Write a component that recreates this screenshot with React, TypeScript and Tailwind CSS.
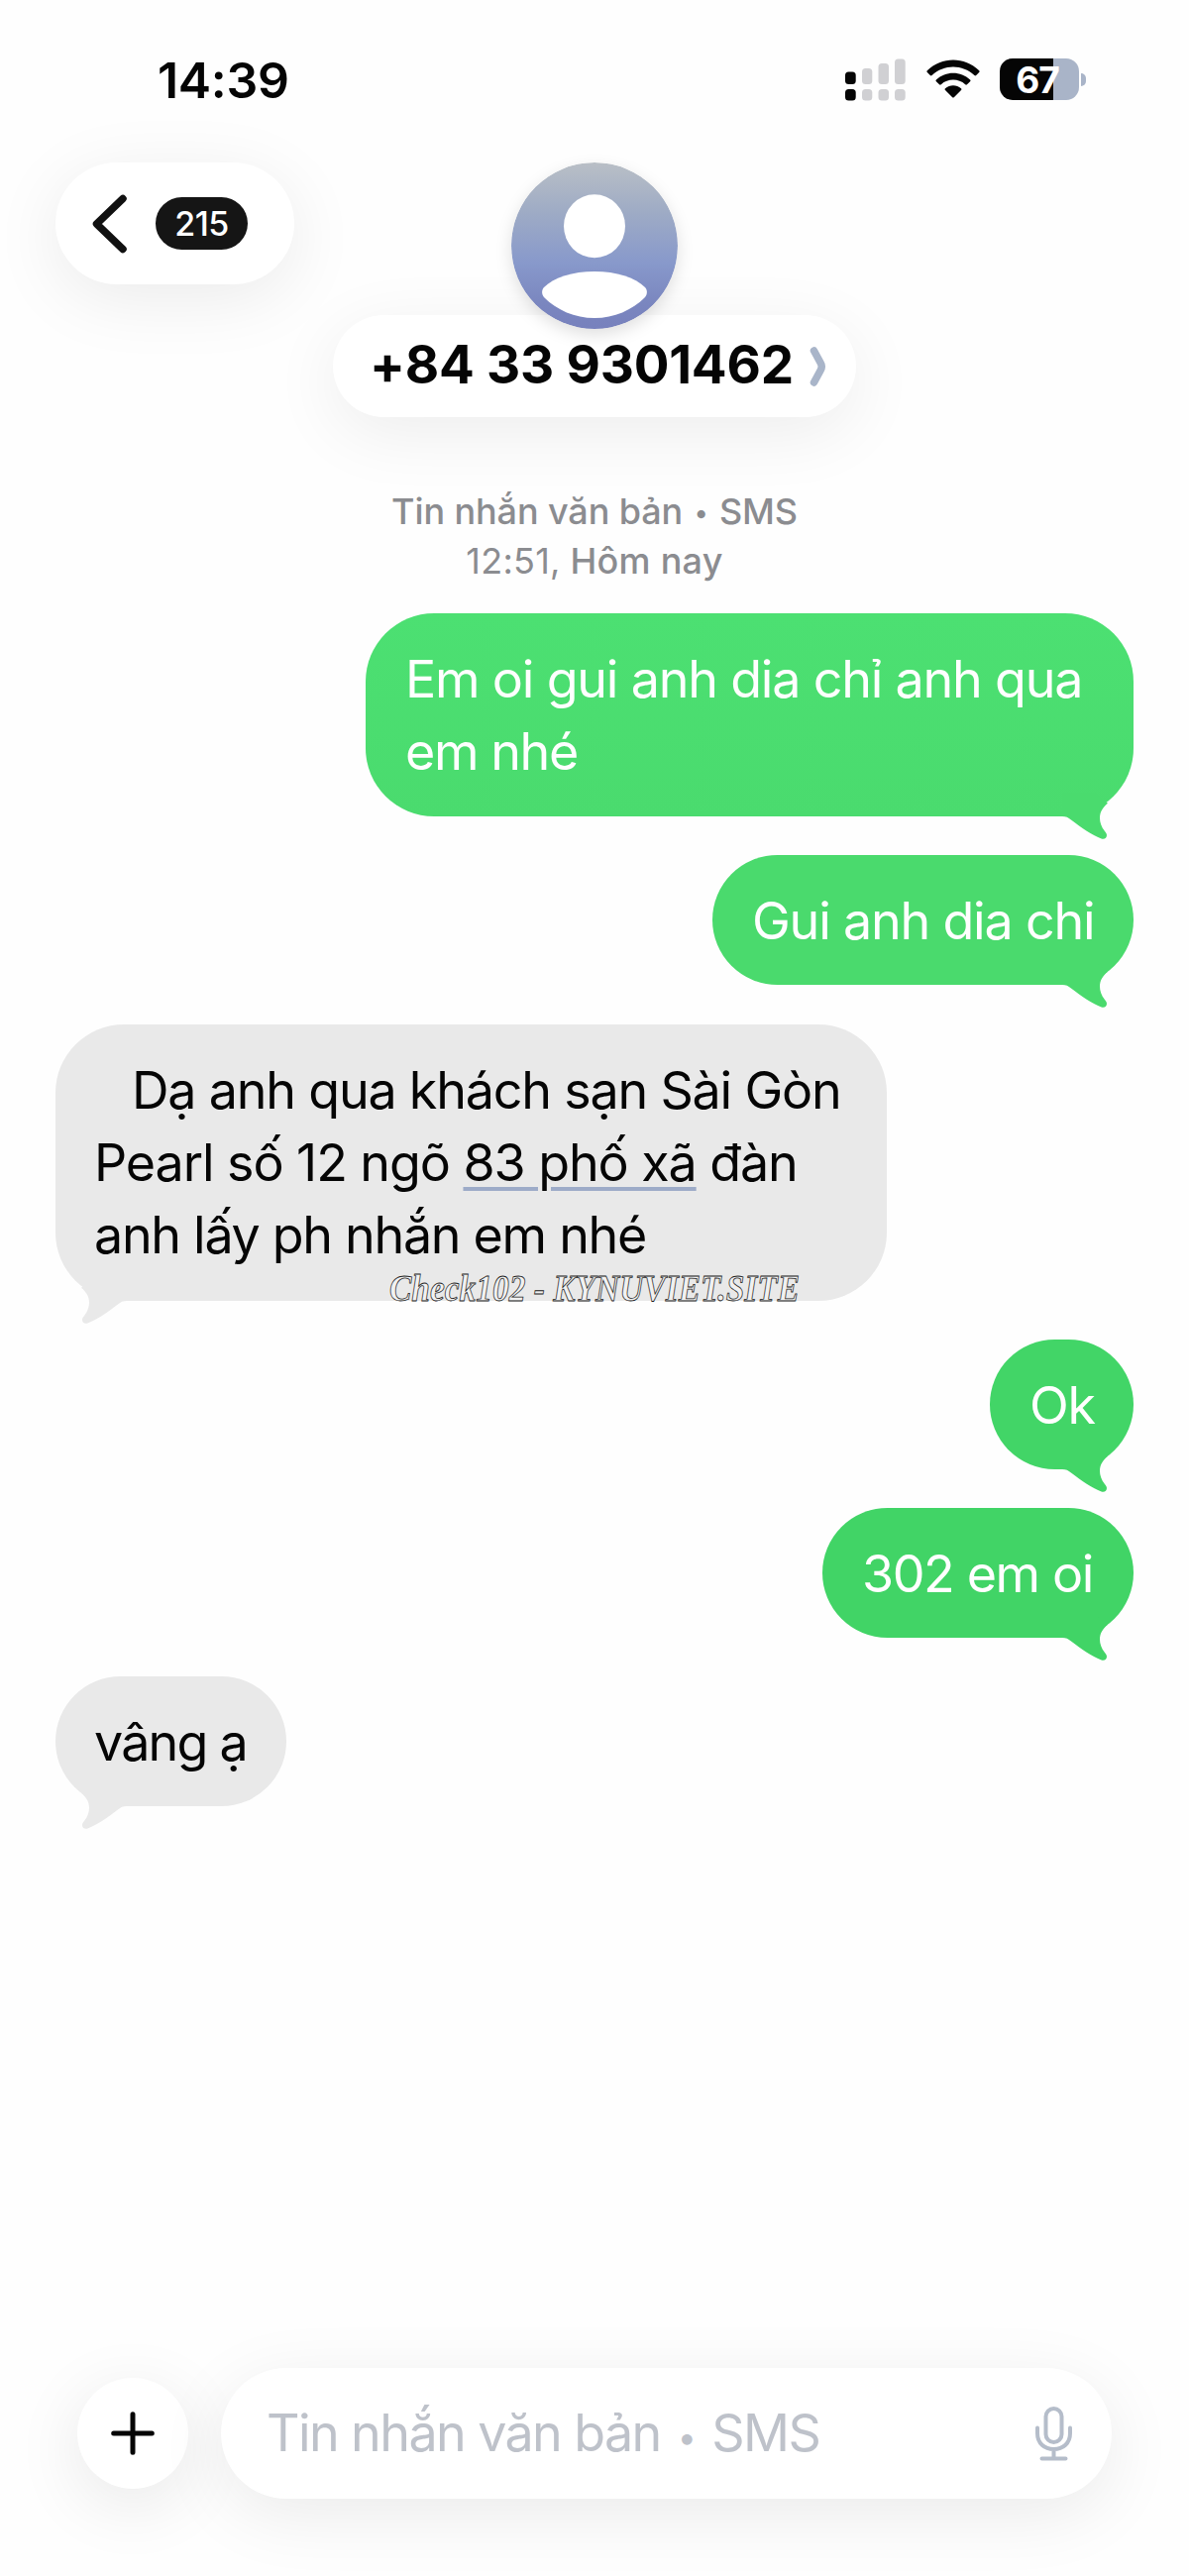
import React from 'react';
import { clsx } from 'clsx';

interface Line {
  text: React.ReactNode;
  className: string;
}

interface Message {
  id: number;
  side: 'sent' | 'received';
  box: string;
  tail: string;
  lines: Line[];
  watermark?: string;
}

const messages: Message[] = [
  {
    id: 1,
    side: 'sent',
    box: 'w-[775px] h-[205px] rounded-[69px] bg-linear-to-b from-[#4ce072] to-[#4adb6e]',
    tail: 'text-[#4adb6e]',
    lines: [
      { text: 'Em oi gui anh dia chỉ anh qua', className: 'tracking-[-1.2px]' },
      { text: 'em nhé', className: 'tracking-[-1.4px]' },
    ],
  },
  {
    id: 2,
    side: 'sent',
    box: 'w-[425px] h-[131px] rounded-[65.5px] bg-[#4ada6d]',
    tail: 'text-[#4ada6d]',
    lines: [{ text: 'Gui anh dia chi', className: 'tracking-[-1.2px]' }],
  },
  {
    id: 3,
    side: 'received',
    box: 'w-[839px] h-[279px] rounded-[69px] bg-[#e9e9e9]',
    tail: 'text-[#e9e9e9]',
    lines: [
      { text: 'Dạ anh qua khách sạn Sài Gòn', className: 'tracking-[-1.2px] pl-[38px]' },
      {
        text: (
          <>
            Pearl số 12 ngõ{' '}
            <span className="underline decoration-[#9dabc8] decoration-[4px] underline-offset-[6px]">83 phố xã</span> đàn
          </>
        ),
        className: 'tracking-[-1.08px]',
      },
      { text: 'anh lấy ph nhắn em nhé', className: 'tracking-[-1.3px]' },
    ],
    watermark: 'Check102 - KYNUVIET.SITE',
  },
  {
    id: 4,
    side: 'sent',
    box: 'w-[145px] h-[131px] rounded-[65.5px] bg-[#42d567]',
    tail: 'text-[#42d567]',
    lines: [{ text: 'Ok', className: 'tracking-[-1.2px]' }],
  },
  {
    id: 5,
    side: 'sent',
    box: 'w-[314px] h-[131px] rounded-[65.5px] bg-[#41d466]',
    tail: 'text-[#41d466]',
    lines: [{ text: '302 em oi', className: 'tracking-[-1.4px]' }],
  },
  {
    id: 6,
    side: 'received',
    box: 'w-[233px] h-[131px] rounded-[65.5px] bg-[#e9e9e9]',
    tail: 'text-[#e9e9e9]',
    lines: [{ text: 'vâng ạ', className: 'tracking-[-1.8px]' }],
  },
];

function SignalIcon() {
  return (
    <svg className="w-[62px] h-[43px]" viewBox="0 0 62 43">
      <g fill="#050505">
        <rect x="0" y="13.5" width="10.7" height="12.5" rx="3.5" />
        <rect x="0" y="31" width="10.7" height="11.5" rx="3.5" />
      </g>
      <g fill="#d0d0d3">
        <rect x="17" y="10" width="10.3" height="16" rx="3.5" />
        <rect x="33.5" y="5" width="10.5" height="21" rx="3.5" />
        <rect x="50" y="0.5" width="10.7" height="25.5" rx="3.5" />
        <rect x="17" y="31" width="10.3" height="11.5" rx="3.5" />
        <rect x="33.5" y="31" width="10.5" height="11.5" rx="3.5" />
        <rect x="50" y="31" width="10.7" height="11.5" rx="3.5" />
      </g>
    </svg>
  );
}

function WifiIcon() {
  return (
    <svg className="w-[54px] h-[40px]" viewBox="0 0 54 40" fill="#050505">
      <path d="M0.8 11.2C15.5 -3.2 38.5 -3.2 53.2 11.2C53.8 11.8 53.8 12.4 53.2 13L50.2 16C49.6 16.6 49 16.6 48.4 16C36.4 4.6 17.6 4.6 5.6 16C5 16.6 4.4 16.6 3.8 16L0.8 13C0.2 12.4 0.2 11.8 0.8 11.2Z" />
      <path d="M9.9 20.4C19.5 11.4 34.5 11.4 44.1 20.4C44.7 21 44.7 21.6 44.1 22.2L41 25.2C40.4 25.8 39.8 25.8 39.2 25.2C32.3 19 21.7 19 14.8 25.2C14.2 25.8 13.6 25.8 13 25.2L9.9 22.2C9.3 21.6 9.3 21 9.9 20.4Z" />
      <path d="M19 29.3C23.6 25.3 30.4 25.3 35 29.3C35.6 29.9 35.6 30.5 35 31.1L28 38C27.3 38.7 26.7 38.7 26 38L19 31.1C18.4 30.5 18.4 29.9 19 29.3Z" />
    </svg>
  );
}

function Battery() {
  return (
    <div className="flex items-center gap-[2.5px]">
      <div className="flex w-[80px] h-[42px] items-center justify-center rounded-[13px] bg-linear-to-r from-[#050505] from-[67.5%] to-[#a9b4c8] to-[67.5%] pr-[3px] text-[37px] font-bold leading-none tracking-[-1px] text-white">
        67
      </div>
      <div className="w-[5px] h-[13px] rounded-r-full bg-[#a9b4c8]" />
    </div>
  );
}

function StatusBar() {
  return (
    <div className="flex h-[164px] shrink-0 justify-between pl-[159px] pr-[104px]">
      <div className="mt-[51px] text-[50px] font-semibold leading-[60px] tracking-[-0.3px] text-[#050505]">14:39</div>
      <div className="mt-[59px] flex h-[42px] items-center">
        <SignalIcon />
        <div className="ml-[20px]">
          <WifiIcon />
        </div>
        <div className="ml-[20px]">
          <Battery />
        </div>
      </div>
    </div>
  );
}

function Avatar() {
  return (
    <svg className="relative z-10 size-[168px] rounded-full drop-shadow-[0_6px_8px_rgba(0,0,0,0.12)]" viewBox="0 0 168 168">
      <defs>
        <linearGradient id="avatar" x1="0" y1="0" x2="0" y2="1">
          <stop offset="0" stopColor="#b9bfc6" />
          <stop offset="0.3" stopColor="#9eabc5" />
          <stop offset="0.6" stopColor="#8899cb" />
          <stop offset="0.85" stopColor="#7a86bf" />
          <stop offset="1" stopColor="#7781bd" />
        </linearGradient>
      </defs>
      <circle cx="84" cy="84" r="84" fill="url(#avatar)" />
      <ellipse cx="84" cy="64.3" rx="31" ry="32" fill="#fff" />
      <path
        d="M33 126C43 116 62 110 84 110C106 110 125 116 135 126C137.500 128.500 137.500 133 135 136C122 149 104 157 84 157C64 157 46 149 33 136C30.500 133 30.500 128.500 33 126Z"
        fill="#fff"
      />
    </svg>
  );
}

function Header() {
  return (
    <div className="grid shrink-0 grid-cols-[280px_528px_280px] items-start px-[56px]">
      <div className="flex w-[241px] h-[123px] items-center rounded-full bg-white pl-[37px] shadow-[0_14px_70px_rgba(0,0,0,0.08)]">
        <svg className="w-[36px] h-[60px]" viewBox="0 0 36 60" fill="none">
          <path d="M31 4.500L4.500 30L31 55.500" stroke="#111" strokeWidth="7.500" strokeLinecap="round" strokeLinejoin="round" />
        </svg>
        <div className="ml-[28px] flex w-[93px] h-[53px] items-center justify-center rounded-full bg-[#151515] text-[34px] font-medium leading-none tracking-[-0.5px] text-white">
          215
        </div>
      </div>
      <div className="flex flex-col items-center">
        <Avatar />
        <div className="-mt-[14px] flex w-[528px] h-[103px] items-center rounded-full bg-white pl-[37px] shadow-[0_16px_70px_rgba(0,0,0,0.07)]">
          <span className="w-[430px] whitespace-nowrap pb-[3px] text-[53px] font-bold leading-[64px] tracking-[-0.2px] text-[#050505]">
            +84 33 9301462
          </span>
          <svg className="ml-[14px] w-[17px] h-[40px]" viewBox="0 0 17 40" fill="none">
            <path d="M4.500 4L11 16Q13.500 20 11 24L4.500 36" stroke="#a9b5c9" strokeWidth="7.500" strokeLinecap="round" strokeLinejoin="round" />
          </svg>
        </div>
      </div>
    </div>
  );
}

function Tail({ side, className }: { side: Message['side']; className: string }) {
  return (
    <svg
      className={clsx('absolute -bottom-[26px] w-[80px] h-[50px]', side === 'sent' ? 'right-0' : 'left-0 -scale-x-100', className)}
      viewBox="0 0 80 50"
      fill="currentColor"
    >
      <path d="M8 24C12 24 14 25 17 27.500C28 36 38 42.500 47 46.300C50.500 47.700 53 46 53 43C53 41.800 52.500 41 51 39C47.500 34.500 46 30 46 25.700C46 19.500 49 15 54 10.800L40 0H8Z" />
    </svg>
  );
}

function Bubble({ message }: { message: Message }) {
  const sent = message.side === 'sent';
  return (
    <div
      className={clsx(
        'relative shrink-0 pt-[30px] text-[52px] leading-[73.4px]',
        sent ? 'self-end pl-[40px] text-white' : 'self-start pl-[39px] text-[#050505]',
        message.box
      )}
    >
      <Tail side={message.side} className={message.tail} />
      {message.lines.map((line, i) => (
        <div key={i} className={clsx('relative whitespace-nowrap', line.className)}>
          {line.text}
        </div>
      ))}
      {message.watermark && (
        <svg className="absolute left-[325px] top-[236px] w-[440px] h-[60px] overflow-visible" viewBox="0 0 440 60">
          <text
            x="12"
            y="43"
            textLength="414"
            lengthAdjust="spacingAndGlyphs"
            fill="#f1f1f1"
            stroke="#222"
            strokeWidth="0.8"
            className="font-['Liberation_Serif',serif] text-[38px] font-bold italic leading-none tracking-normal"
          >
            {message.watermark}
          </text>
        </svg>
      )}
    </div>
  );
}

function Composer() {
  return (
    <div className="mt-auto flex shrink-0 items-center gap-[33px] pb-[78px] pl-[78px] pr-[78px]">
      <button className="flex size-[112px] items-center justify-center rounded-full bg-white shadow-[0_16px_70px_rgba(0,0,0,0.09)]">
        <svg className="size-[44px]" viewBox="0 0 44 44" fill="none">
          <path d="M22 2.700V41.300M2.700 22H41.300" stroke="#050505" strokeWidth="5" strokeLinecap="round" />
        </svg>
      </button>
      <div className="flex h-[132px] flex-1 items-center justify-between rounded-full bg-white pl-[46px] pr-[39px] shadow-[0_16px_70px_rgba(0,0,0,0.08)]">
        <span className="whitespace-nowrap text-[52px] leading-[64px] tracking-[-1.6px] text-[#bec2ca]">
          Tin nhắn văn bản <span className="relative -top-[2px] mx-[4px] text-[34px] leading-none">•</span> SMS
        </span>
        <svg className="w-[39px] h-[56px]" viewBox="0 0 39 56" fill="none" stroke="#b5bdca" strokeWidth="4" strokeLinecap="round">
          <rect x="11.500" y="3" width="16" height="34" rx="8" />
          <path d="M3 22.500V28C3 38 10 44 19.500 44S36 38 36 28V22.500M19.500 44V53M7.500 53.500H31.500" />
        </svg>
      </div>
    </div>
  );
}

export default function App() {
  return (
    <div className="flex w-[1200px] h-[2600px] flex-col overflow-hidden bg-[#fefefe] font-['Inter','Liberation_Sans',sans-serif]">
      <StatusBar />
      <Header />
      {/* Conversation info */}
      <div className="mt-[70px] shrink-0 text-center text-[36px] font-medium leading-[50px] text-[#8b8c90]">
        <div className="tracking-[-0.1px]">
          Tin nhắn văn bản <span className="relative -top-[2px] mx-[2px] text-[26px] leading-none">•</span> SMS
        </div>
        <div className="tracking-[0.25px]">
          <span className="font-normal">12:51,</span> Hôm nay
        </div>
      </div>
      {/* Messages */}
      <div className="mt-[28px] flex shrink-0 flex-col gap-[39.3px] px-[56px]">
        {messages.map((message) => (
          <Bubble key={message.id} message={message} />
        ))}
      </div>
      <Composer />
    </div>
  );
}
